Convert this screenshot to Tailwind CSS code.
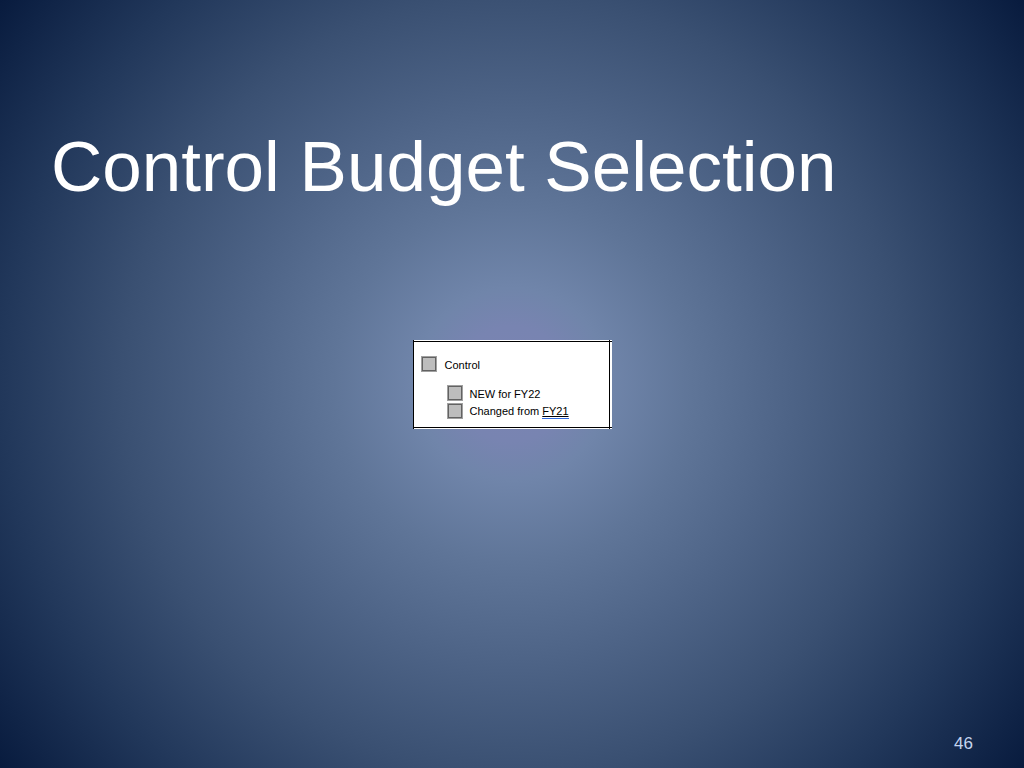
<!DOCTYPE html>
<html lang="en">
<head>
<meta charset="utf-8">
<meta name="viewport" content="width=device-width, initial-scale=1">
<title>Control Budget Selection</title>
<script src="https://cdn.jsdelivr.net/npm/@tailwindcss/browser@4"></script>
</head>
<body>
<main class="grid min-h-screen grid-rows-[1fr_auto_1fr] bg-[radial-gradient(circle_at_center,#7b84b3_0%,#7884b1_9%,#7085aa_15%,#5f7598_28%,#4e6487_43%,#3a5072_61%,#21375a_80%,#081b3e_100%)] font-['Liberation_Sans',Arial,sans-serif]">
  <header class="px-[51px] pt-[127px]">
    <h1 class="text-[71px] leading-[80px] text-white">Control Budget Selection</h1>
  </header>

  <section aria-label="Budget options" class="mx-auto flex w-[199px] bg-white text-[11px] leading-[17px] text-black">
    <div class="flex-1 border-l border-black py-px">
      <div class="border-y border-black px-[7px] pt-[14px] pb-[7px]">
        <label class="flex h-[17px] items-center gap-2">
          <input type="checkbox" class="size-4 shrink-0 appearance-none border-2 border-[#626262] bg-[#bdbdbd] outline outline-1 -outline-offset-1 outline-[#a0a0a0] checked:bg-[#626262]">
          <span class="pt-0.5">Control</span>
        </label>
        <div class="mt-3 pl-[26px]">
          <label class="flex h-[17px] items-center gap-[7px]">
            <input type="checkbox" class="size-4 shrink-0 appearance-none border-2 border-[#626262] bg-[#bdbdbd] outline outline-1 -outline-offset-1 outline-[#a0a0a0] checked:bg-[#626262]">
            <span class="pt-0.5">NEW for FY22</span>
          </label>
          <label class="flex h-[18px] items-center gap-[7px]">
            <input type="checkbox" class="size-4 shrink-0 appearance-none border-2 border-[#626262] bg-[#bdbdbd] outline outline-1 -outline-offset-1 outline-[#a0a0a0] checked:bg-[#626262]">
            <span class="pt-0.5">Changed from <span class="border-b border-[#2f6be0] pb-px underline underline-offset-1">FY21</span></span>
          </label>
        </div>
      </div>
    </div>
    <div class="w-px bg-black"></div>
    <div class="flex w-0.5 py-px"><div class="flex-1 border-y border-black"></div></div>
  </section>

  <footer class="flex items-end justify-end px-[51px] pb-[13px]">
    <span class="text-[17px] leading-[22px] text-[#c5d5ef]">46</span>
  </footer>
</main>
</body>
</html>
